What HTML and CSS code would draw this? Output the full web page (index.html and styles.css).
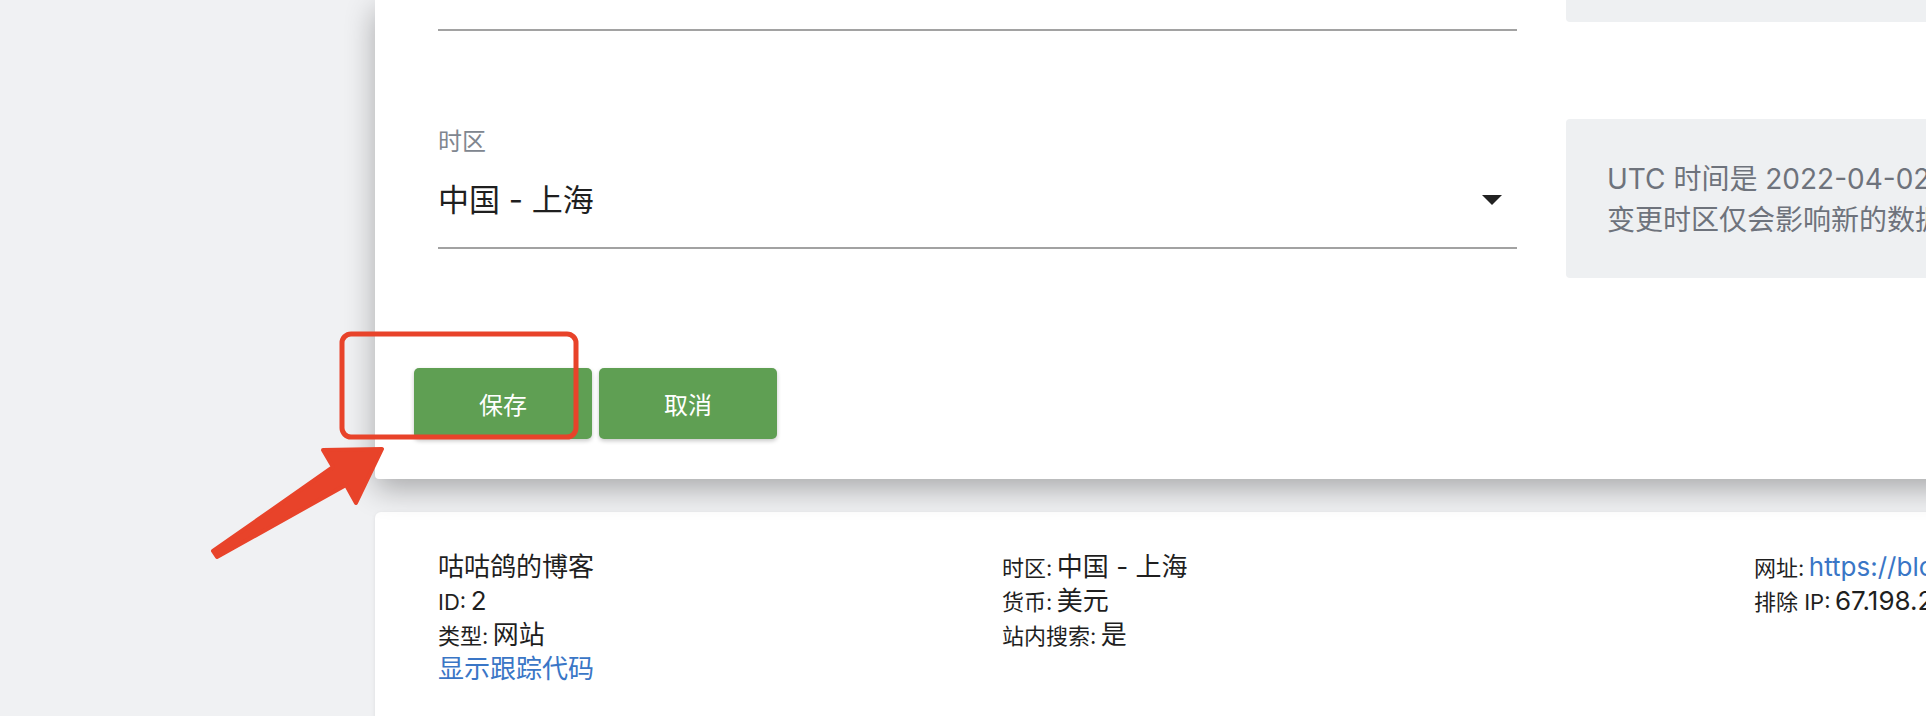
FILE: index.html
```html
<!DOCTYPE html>
<html lang="zh-CN">
<head>
<meta charset="utf-8">
<title>网站设置</title>
<link rel="stylesheet" href="styles.css">
</head>
<body>
<div class="page">
  <section class="card settings">
    <div class="row row-cut">
      <div class="field field-cut"></div>
      <div class="help help-cut"></div>
    </div>
    <div class="row row-tz">
      <div class="field">
        <div class="label">时区</div>
        <div class="select">
          <span class="value">中国 - 上海</span>
          <span class="caret"></span>
        </div>
      </div>
      <div class="help">
        <p>UTC 时间是 2022-04-02 08:15:37。</p>
        <p>变更时区仅会影响新的数据。</p>
      </div>
    </div>
    <div class="actions">
      <button class="btn">保存</button>
      <button class="btn">取消</button>
    </div>
  </section>

  <section class="card summary">
    <div class="col">
      <div class="title">咕咕鸽的博客</div>
      <div class="line"><span class="k">ID:</span> <span class="v">2</span></div>
      <div class="line"><span class="k">类型:</span> <span class="v">网站</span></div>
      <div class="line"><a class="v link">显示跟踪代码</a></div>
    </div>
    <div class="col">
      <div class="line"><span class="k">时区:</span> <span class="v">中国 - 上海</span></div>
      <div class="line"><span class="k">货币:</span> <span class="v">美元</span></div>
      <div class="line"><span class="k">站内搜索:</span> <span class="v">是</span></div>
    </div>
    <div class="col">
      <div class="line"><span class="k">网址:</span> <a class="v link">https://blog.gugu.com</a></div>
      <div class="line"><span class="k">排除 IP:</span> <span class="v">67.198.231.45</span></div>
    </div>
  </section>
</div>

<svg class="annot" width="1926" height="716" viewBox="0 0 1926 716">
  <rect x="342" y="334" width="234" height="103" rx="9" ry="9" fill="none" stroke="#e8432a" stroke-width="5"/>
  <polygon points="382,449 323,450 333,467 213,551 217,557 346,485 356,503" fill="#e8432a" stroke="#e8432a" stroke-width="4" stroke-linejoin="round"/>
</svg>
</body>
</html>
```
FILE: styles.css
```css
html, body {
  margin: 0;
  padding: 0;
  height: 716px;
  overflow: hidden;
  background: #f0f1f3;
}

body {
  font-family: Inter, "Noto Sans CJK SC", sans-serif;
  color: #1f1f1f;
  position: relative;
}

.page {
  padding-left: 375px;
  width: 1700px;
}

.card {
  background: #ffffff;
}

.settings {
  position: relative;
  z-index: 1;
  padding: 0 0 40px 39px;
  border-radius: 0 0 0 4px;
  box-shadow: 0 10px 30px rgba(0, 0, 0, 0.3);
}

.row {
  display: grid;
  grid-template-columns: 1079px 1fr;
  column-gap: 49px;
  align-items: start;
  padding-left: 24px;
}

.field-cut {
  height: 29px;
  border-bottom: 2px solid #a2a2a2;
}

.help {
  background: #eef0f2;
  border-radius: 4px;
}

.help-cut {
  height: 22px;
  border-radius: 0 0 4px 4px;
}

.row-tz {
  margin-top: 88px;
}

.row-tz .field {
  padding-top: 11px;
  padding-bottom: 29px;
  border-bottom: 2px solid #a2a2a2;
}

.label {
  font-size: 24px;
  line-height: 24px;
  color: #80868f;
}

.select {
  margin-top: 28px;
  display: flex;
  align-items: center;
  justify-content: space-between;
  height: 36px;
}

.value {
  font-size: 31px;
  line-height: 36px;
  color: #1f1f1f;
}

.caret {
  width: 0;
  height: 0;
  border-left: 10px solid transparent;
  border-right: 10px solid transparent;
  border-top: 10px solid #222222;
  margin-right: 15px;
}

.row-tz .help {
  height: 159px;
  box-sizing: border-box;
  padding: 2px 0 0 41px;
  display: flex;
  flex-direction: column;
  justify-content: center;
  white-space: nowrap;
  overflow: hidden;
}

.help p {
  margin: 0;
  font-size: 28px;
  line-height: 41px;
  color: #6e737c;
}

.actions {
  margin-top: 90px;
  display: flex;
  gap: 7px;
}

.btn {
  width: 178px;
  height: 71px;
  border: none;
  border-radius: 5px;
  background: #5f9f53;
  color: #ffffff;
  font-family: Inter, "Noto Sans CJK SC", sans-serif;
  font-size: 24px;
  box-shadow: 0 2px 4px rgba(0, 0, 0, 0.22);
  padding: 0;
}

.summary {
  margin-top: 33px;
  padding: 38px 0 60px 63px;
  border-radius: 6px 0 0 0;
  display: grid;
  grid-template-columns: 564px 752px 1fr;
  box-shadow: 0 1px 4px rgba(0, 0, 0, 0.08);
  height: 300px;
}

.col {
  white-space: nowrap;
  overflow: hidden;
}

.title,
.line {
  line-height: 34px;
  height: 34px;
}

.title {
  font-size: 26px;
}

.k {
  font-size: 22px;
  color: #1f1f1f;
}

.v {
  font-size: 26px;
  color: #1f1f1f;
}

.link {
  color: #3a76c6;
  text-decoration: none;
}

.annot {
  position: absolute;
  top: 0;
  left: 0;
  z-index: 10;
  pointer-events: none;
}
```
